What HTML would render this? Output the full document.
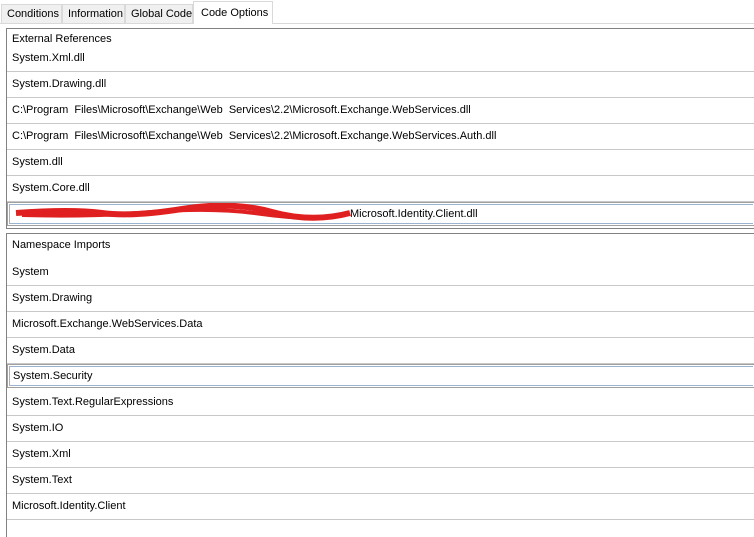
<!DOCTYPE html>
<html style="overflow:hidden;height:537px"><head><style>
body{margin:0;width:754px;height:537px;background:#fff;position:relative;overflow:hidden;font-family:"Liberation Sans",sans-serif;font-size:11px;color:#000}
.a{position:absolute}
.tab{position:absolute;top:4px;height:19px;background:#f0f0f0;border:1px solid #d9d9d9;border-bottom:none;line-height:19px;padding-left:5px;box-sizing:border-box;white-space:nowrap;overflow:hidden}
.sep{position:absolute;left:7px;right:0;height:1px;background:#c8c8c8}
.t{position:absolute;left:12px;white-space:nowrap}
.sel{position:absolute;left:7px;right:0;height:24px;border:1px solid #a0a0a0;border-right:none;box-sizing:border-box}
.sel div{position:absolute;inset:1px;border:1px solid #99b4d1;border-right:none}
</style></head><body>
<div class="a" style="left:0;top:23px;width:754px;height:1px;background:#d9d9d9"></div>
<div class="tab" style="left:1px;width:61px">Conditions</div>
<div class="tab" style="left:62px;width:63px">Information</div>
<div class="tab" style="left:125px;width:68px">Global Code</div>
<div class="tab" style="left:193px;top:1px;height:23px;width:80px;background:#fff;padding-left:7px;line-height:22px">Code Options</div>

<div class="a" style="left:6px;top:28px;width:748px;height:201px;border:1px solid #828282;border-right:none;box-sizing:border-box"></div>
<div class="t" style="top:33px">External References</div>
<div class="t" style="top:52px">System.Xml.dll</div>
<div class="sep" style="top:71px"></div>
<div class="t" style="top:78px">System.Drawing.dll</div>
<div class="sep" style="top:97px"></div>
<div class="t" style="top:104px">C:\Program&nbsp; Files\Microsoft\Exchange\Web&nbsp; Services\2.2\Microsoft.Exchange.WebServices.dll</div>
<div class="sep" style="top:123px"></div>
<div class="t" style="top:130px">C:\Program&nbsp; Files\Microsoft\Exchange\Web&nbsp; Services\2.2\Microsoft.Exchange.WebServices.Auth.dll</div>
<div class="sep" style="top:149px"></div>
<div class="t" style="top:156px">System.dll</div>
<div class="sep" style="top:175px"></div>
<div class="t" style="top:182px">System.Core.dll</div>
<div class="sep" style="top:201px"></div>
<div class="sel" style="top:202px"><div></div></div>
<svg class="a" style="left:12px;top:203px" width="340" height="22"><path d="M4 10 Q60 6 90 10 T170 6 T260 9 T338 10" stroke="#e02020" stroke-width="6" fill="none"/><path d="M10 12 Q80 14 140 9 T250 11 T330 12" stroke="#e02020" stroke-width="4" fill="none"/></svg>
<div class="t" style="top:208px;left:350px">Microsoft.Identity.Client.dll</div>

<div class="a" style="left:6px;top:233px;width:748px;height:304px;border:1px solid #828282;border-right:none;border-bottom:none;box-sizing:border-box"></div>
<div class="t" style="top:239px">Namespace Imports</div>
<div class="t" style="top:266px">System</div>
<div class="sep" style="top:285px"></div>
<div class="t" style="top:292px">System.Drawing</div>
<div class="sep" style="top:311px"></div>
<div class="t" style="top:318px">Microsoft.Exchange.WebServices.Data</div>
<div class="sep" style="top:337px"></div>
<div class="t" style="top:344px">System.Data</div>
<div class="sep" style="top:363px"></div>
<div class="sel" style="top:364px"><div></div></div>
<div class="t" style="top:370px;left:13px">System.Security</div>
<div class="t" style="top:396px">System.Text.RegularExpressions</div>
<div class="sep" style="top:415px"></div>
<div class="t" style="top:422px">System.IO</div>
<div class="sep" style="top:441px"></div>
<div class="t" style="top:448px">System.Xml</div>
<div class="sep" style="top:467px"></div>
<div class="t" style="top:474px">System.Text</div>
<div class="sep" style="top:493px"></div>
<div class="t" style="top:500px">Microsoft.Identity.Client</div>
<div class="sep" style="top:519px"></div>
</body></html>
